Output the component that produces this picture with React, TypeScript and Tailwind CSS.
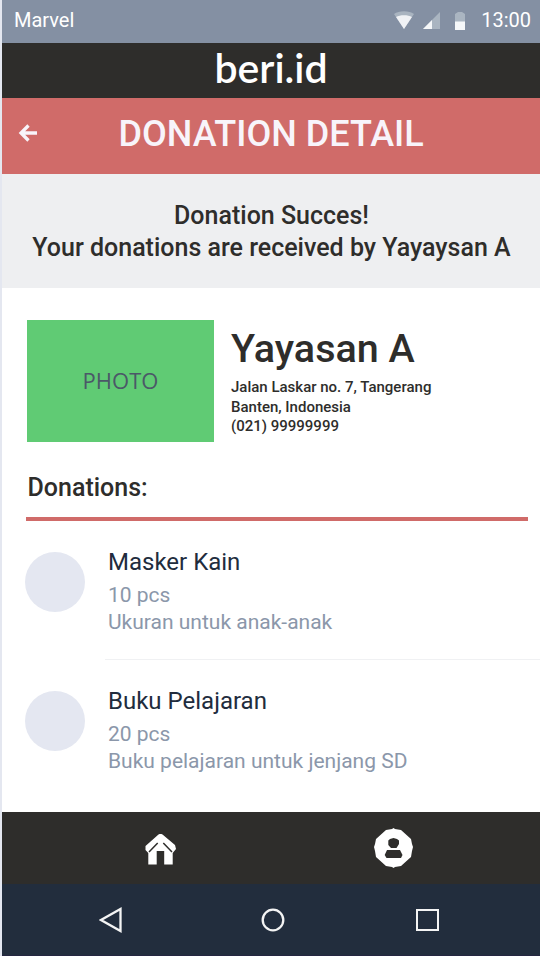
import React from "react";

type Donation = { name: string; amount: string; note: string };

const donations: Donation[] = [
  { name: "Masker Kain", amount: "10 pcs", note: "Ukuran untuk anak-anak" },
  { name: "Buku Pelajaran", amount: "20 pcs", note: "Buku pelajaran untuk jenjang SD" },
];

function StatusBar() {
  return (
    <header className="flex h-[43px] items-center justify-between bg-[#8490a3] pb-[3px] pl-[12px] pr-[9px] text-[20px] text-white">
      <span>Marvel</span>
      <div className="flex items-center">
        <svg className="mr-[9px]" width="20" height="18" viewBox="0 0 20 18">
          <path d="M0 3C5-.7 15-.7 20 3L10 18Z" fill="#a9b4c0" />
          <path d="M2 6C6 3.500 14 3.500 18 6L10 18Z" fill="#f0f2f5" />
        </svg>
        <svg className="mr-[15px]" width="17" height="17" viewBox="0 0 17 17">
          <path d="M17 0V17H0Z" fill="#aab5c1" />
          <path d="M9 8V17H0Z" fill="#f5f7f9" />
        </svg>
        <svg className="mr-[16px]" width="10" height="19" viewBox="0 0 10 19">
          <path d="M0 19V3L3 1H7L10 3V19Z" fill="#aab5c1" />
          <path d="M0 10.500H10V19H0Z" fill="#f5f7f9" />
        </svg>
        <span>13:00</span>
      </div>
    </header>
  );
}

function DonationRow({ item, last }: { item: Donation; last: boolean }) {
  return (
    <li className="flex h-[139px] pl-[23px]">
      <div className="mt-[31.400px] size-[60px] shrink-0 rounded-full bg-[#e4e7f1]" />
      <div className={last ? "ml-[20px] grow pl-[3px] pt-[26px]" : "ml-[20px] grow border-b border-[#f0f1f3] pl-[3px] pt-[26px]"}>
        <h3 className="text-[24px] leading-[30px] text-[#212c3d]">{item.name}</h3>
        <p className="mt-[5px] text-[21px] leading-[27px] text-[#8b97aa]">{item.amount}</p>
        <p className="text-[21px] leading-[27px] text-[#8b97aa]">{item.note}</p>
      </div>
    </li>
  );
}

export default function App() {
  return (
    <div className="flex h-[956px] w-[540px] flex-col overflow-hidden whitespace-nowrap border-l-2 border-[#e4e7f0] bg-white font-['Roboto',sans-serif] text-[#2e2d2b]">
      <StatusBar />
      <div className="flex h-[55px] items-center justify-center bg-[#2e2d2b] pb-[6px] font-['Lato',sans-serif] text-[41px] font-semibold leading-none text-white">
        beri.id
      </div>
      <div className="flex h-[76px] items-center bg-[#d06b69] text-[#f8f4fa]">
        <svg className="ml-[16px] mt-[-6px]" width="20" height="18" viewBox="0 0 20 18" fill="none" stroke="currentColor" strokeWidth="3.300">
          <path d="M19 9H3.500M10.500 1.500L3 9L10.500 16.500" />
        </svg>
        <h1 className="ml-[80.500px] mt-[-4px] text-[36px] font-medium leading-none">DONATION DETAIL</h1>
      </div>
      <div className="flex h-[114px] flex-col items-center bg-[#eeeff1] pl-[1px] pt-[26px] text-[25px] font-medium leading-[32px]">
        <p>Donation Succes!</p>
        <p>Your donations are received by Yayaysan A</p>
      </div>
      <main className="h-[524px] pt-[32px]">
        <section className="flex pl-[25px]">
          <div className="flex h-[122px] w-[187px] items-center justify-center bg-[#60cb74] pb-[2px] font-['Open_Sans',sans-serif] text-[22px] text-[#4b5868]">PHOTO</div>
          <div className="ml-[17px]">
            <h2 className="mt-[4px] text-[39.500px] font-medium leading-[50px]">Yayasan A</h2>
            <div className="mt-[4px] text-[15px] font-medium leading-[19.500px]">
              <p>Jalan Laskar no. 7, Tangerang</p>
              <p>Banten, Indonesia</p>
              <p>(021) 99999999</p>
            </div>
          </div>
        </section>
        <h2 className="mt-[30px] pl-[25.500px] text-[25px] font-medium leading-[32px]">Donations:</h2>
        <div className="ml-[24px] mr-[12px] mt-[13px] h-[4px] bg-[#d06b69]" />
        <ul>
          {donations.map((d, i) => (
            <DonationRow key={d.name} item={d} last={i === donations.length - 1} />
          ))}
        </ul>
      </main>
      <nav className="flex h-[72px] shrink-0 items-center bg-[#2e2d2b]">
        <svg className="ml-[143px] mt-[4px]" width="32" height="32" viewBox="0 0 32 32" fill="#fff">
          <path d="M13.500 .5L15.500 -.5L17.500 .5L30 11L31 15L28.500 18L27.700 19V30.500H19.200V17H11.700V30.500H3.300V19L.5 16V12Z" />
          <path d="M4 18L12.700 9M18.300 9L27 18" fill="none" stroke="#2e2d2b" strokeWidth="1.500" />
        </svg>
        <svg className="ml-[197px] mt-[-1px]" width="39" height="40" viewBox="0 0 39 40">
          <path d="M12 2L18 1L19.500 0L21 1L27 2L37 11L38 16L39 19L38 23L37 29L27 38L21 39L19.500 40L18 39L12 38L2 29L1 23L0 19L1 16L2 11Z" fill="#fff" />
          <path d="M16 11L19.500 10L23 11L25 12.500V16L22.500 20H17L14.300 17V12.500Z" fill="#2e2d2b" />
          <path d="M13 22H26L28.500 27L27 30H12.500L10.700 27Z" fill="#2e2d2b" />
        </svg>
      </nav>
      <footer className="flex h-[72px] shrink-0 items-center border-b border-[#252641] bg-[#222d3d]">
        <svg className="ml-[97px]" width="23" height="26" viewBox="0 0 23 26" fill="none" stroke="#f4f4f4" strokeWidth="2.300">
          <path d="M21.500 2V24L2 13Z" />
        </svg>
        <svg className="ml-[139px]" width="24" height="24" viewBox="0 0 24 24" fill="none" stroke="#f4f4f4" strokeWidth="2.300">
          <circle cx="12" cy="12" r="10.300" />
        </svg>
        <div className="ml-[131px] h-[22px] w-[23px] border-2 border-[#f4f4f4]" />
      </footer>
    </div>
  );
}
